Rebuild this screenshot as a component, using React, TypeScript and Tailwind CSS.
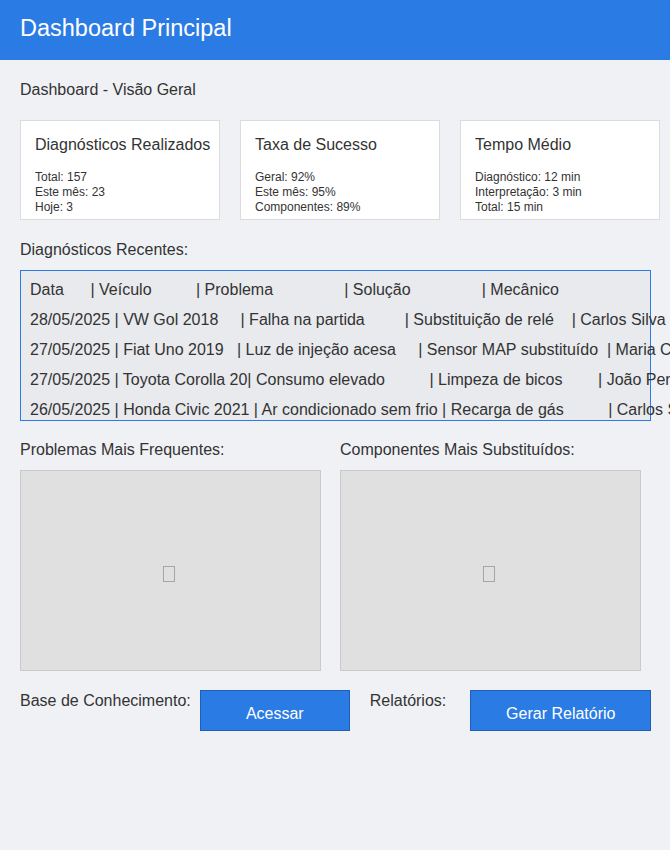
import React from "react";

const font = { fontFamily: '"Liberation Sans", Arial, sans-serif' };

const statCards = [
  {
    title: "Diagnósticos Realizados",
    lines: ["Total: 157", "Este mês: 23", "Hoje: 3"],
  },
  {
    title: "Taxa de Sucesso",
    lines: ["Geral: 92%", "Este mês: 95%", "Componentes: 89%"],
  },
  {
    title: "Tempo Médio",
    lines: ["Diagnóstico: 12 min", "Interpretação: 3 min", "Total: 15 min"],
  },
];

// spacing is part of the content (padded plain-text columns)
const recentRows = [
  "Data      | Veículo          | Problema                | Solução                | Mecânico",
  "28/05/2025 | VW Gol 2018     | Falha na partida         | Substituição de relé    | Carlos Silva",
  "27/05/2025 | Fiat Uno 2019   | Luz de injeção acesa     | Sensor MAP substituído  | Maria Costa",
  "27/05/2025 | Toyota Corolla 20| Consumo elevado          | Limpeza de bicos        | João Pereira",
  "26/05/2025 | Honda Civic 2021 | Ar condicionado sem frio | Recarga de gás          | Carlos Silva",
];

function StatCard({ title, lines }: { title: string; lines: string[] }) {
  return (
    <div className="w-[200px] h-[100px] shrink-0 bg-white border border-[#dcdcdc] pt-[15px] pl-[14px]">
      <div className="text-[16px] leading-[18px] text-[#333] whitespace-nowrap">{title}</div>
      <div className="mt-[16px] text-[12px] leading-[15px] text-[#333]">
        {lines.map((l) => (
          <div key={l}>{l}</div>
        ))}
      </div>
    </div>
  );
}

function ChartPlaceholder({ label }: { label: string }) {
  return (
    <div className="w-[300px]">
      <div className="text-[16px] leading-[20px] text-[#333] mb-[10px] whitespace-nowrap">{label}</div>
      <div className="w-[301px] h-[201px] bg-[#e0e0e0] border border-[#cacaca] flex items-center justify-center">
        <span className="block w-[12px] h-[16px] border border-[#a6a6a6] mt-[7px] mr-[3px]" />
      </div>
    </div>
  );
}

export default function App() {
  return (
    <div className="w-full min-h-screen bg-[#f0f1f5] overflow-hidden" style={font}>
      <header className="h-[60px] bg-[#2b7be4] pl-[20px] pt-[14px]">
        <h1 className="text-[23.5px] leading-[28px] text-white">Dashboard Principal</h1>
      </header>

      <main className="px-[20px] pt-[20px]">
        <div className="text-[16px] leading-[20px] text-[#333]">Dashboard - Visão Geral</div>

        <div className="mt-[20px] flex gap-[20px]">
          {statCards.map((c) => (
            <StatCard key={c.title} title={c.title} lines={c.lines} />
          ))}
        </div>

        <div className="mt-[20px] text-[16px] leading-[20px] text-[#333] mb-[10px]">
          Diagnósticos Recentes:
        </div>
        <div className="w-[631px] h-[151px] bg-[#e8eaed] border border-[#2b7be4] pt-[4px] pl-[9px]">
          {recentRows.map((r, i) => (
            <div key={i} className="whitespace-pre text-[16px] leading-[30px] text-[#333]">
              {r}
            </div>
          ))}
        </div>

        <div className="mt-[19px] flex gap-[20px]">
          <ChartPlaceholder label="Problemas Mais Frequentes:" />
          <ChartPlaceholder label="Componentes Mais Substituídos:" />
        </div>

        <div className="mt-[19px] flex items-start text-[16px] leading-[20px] text-[#333] whitespace-nowrap">
          <span className="shrink-0 pt-[1px]">Base de Conhecimento:</span>
          <button className="shrink-0 ml-[9px] w-[150px] h-[41px] bg-[#2b7be4] border border-[#1f5fb9] text-white text-[16px] leading-[18px] pt-[14px] flex justify-center">
            Acessar
          </button>
          <span className="shrink-0 ml-[20px] pt-[1px]">Relatórios:</span>
          <button className="shrink-0 ml-[24px] w-[181px] h-[41px] bg-[#2b7be4] border border-[#1f5fb9] text-white text-[16px] leading-[18px] pt-[14px] flex justify-center">
            Gerar Relatório
          </button>
        </div>
      </main>
    </div>
  );
}
